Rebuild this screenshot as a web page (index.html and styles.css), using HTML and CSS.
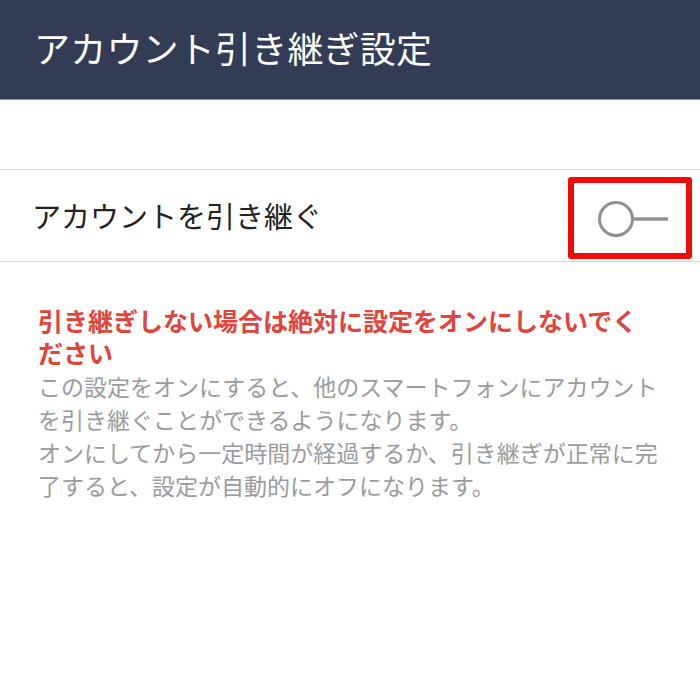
FILE: index.html
```html
<!DOCTYPE html>
<html lang="ja">
<head>
<meta charset="utf-8">
<title>アカウント引き継ぎ設定</title>
<link rel="stylesheet" href="styles.css">
</head>
<body>
<header class="header">
  <h1 class="title">アカウント引き継ぎ設定</h1>
</header>
<div class="row">
  <span class="row-label">アカウントを引き継ぐ</span>
  <div class="toggle-box">
    <svg class="toggle" width="80" height="50" viewBox="0 0 80 50">
      <circle cx="25" cy="25" r="16.5" fill="none" stroke="#8d9097" stroke-width="3"/>
      <line x1="41" y1="25" x2="77" y2="25" stroke="#8d9097" stroke-width="3.4"/>
    </svg>
  </div>
</div>
<div class="notes">
  <p class="warning">引き継ぎしない場合は絶対に設定をオンにしないでください</p>
  <p class="desc">この設定をオンにすると、他のスマートフォンにアカウントを引き継ぐことができるようになります。<br>オンにしてから一定時間が経過するか、引き継ぎが正常に完了すると、設定が自動的にオフになります。</p>
</div>
</body>
</html>
```
FILE: styles.css
```css
html, body {
  margin: 0;
  padding: 0;
  background: #ffffff;
  font-family: "Noto Sans CJK JP", "Noto Sans", sans-serif;
}
.header {
  height: 100px;
  box-sizing: border-box;
  background: #333c55;
  border-bottom: 1px solid #8a8f9c;
  display: flex;
  align-items: center;
  padding: 0 0 5px 34px;
}
.title {
  margin: 0;
  color: #ffffff;
  font-size: 36px;
  font-weight: 400;
  line-height: 1;
  letter-spacing: 0.2px;
}
.row {
  margin-top: 69px;
  height: 93px;
  box-sizing: border-box;
  border-top: 1px solid #dcdcdc;
  border-bottom: 1px solid #d6d6d6;
  display: flex;
  align-items: center;
  justify-content: space-between;
  padding: 0 8px 0 32px;
}
.row-label {
  font-size: 29px;
  color: #222222;
  line-height: 1;
}
.toggle-box {
  width: 124px;
  height: 82px;
  box-sizing: border-box;
  border: 6px solid #f00a0a;
  border-radius: 3px;
  display: flex;
  align-items: center;
  justify-content: flex-start;
  padding-left: 17px;
  margin-top: 5px;
}
.toggle {
  display: block;
  margin-top: 2px;
}
.notes {
  padding: 0 0 0 38px;
  width: 623px;
  margin-top: 42px;
}
.warning {
  margin: 0;
  color: #e0443a;
  font-weight: 700;
  font-size: 25px;
  line-height: 32px;
}
.desc {
  margin: 2px 0 0 0;
  color: #9a9ba0;
  font-size: 23px;
  line-height: 33px;
}
```
